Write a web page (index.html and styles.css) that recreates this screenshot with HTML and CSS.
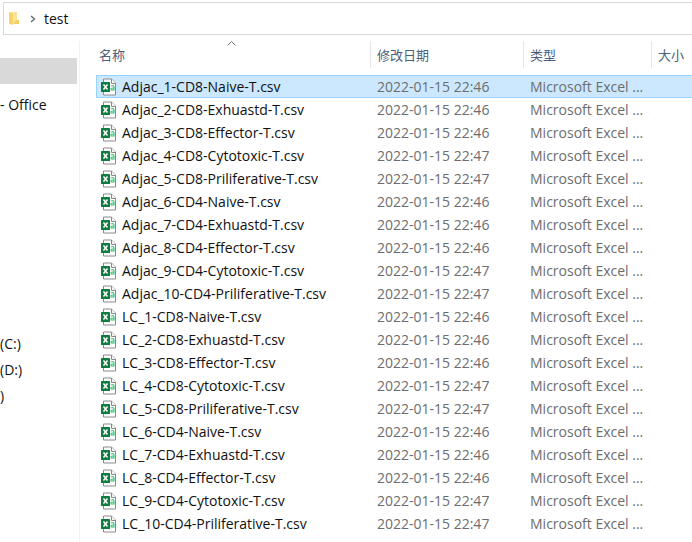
FILE: index.html
```
<!DOCTYPE html>
<html lang="zh-CN">
<head>
  <meta charset="UTF-8">
  <title>test</title>
  <link rel="stylesheet" href="styles.css">
</head>
<body>
  <svg class="defs" width="0" height="0">
    <symbol id="csv" viewBox="0 0 16 18">
      <path d="M2.500 1h8l4 4v12h-12z" fill="#fff" stroke="#8a8a8a"/>
      <path d="M10.500 1v4.500h4.500" fill="#f4f4f4" stroke="#8a8a8a"/>
      <rect x="0" y="4" width="9" height="10" rx="0.500" fill="#107c41"/>
      <path d="M2.500 6.500l4 5M6.500 6.500l-4 5" stroke="#fff" stroke-width="1.500"/>
      <path d="M10 8c1.300-.8 3-.5 3 1v3.500M13 9.800c-1.800 0-3 .2-3 1.300 0 1.400 2.100 1.300 3 0" fill="none" stroke="#4fc98a" stroke-width="1.300"/>
    </symbol>
  </svg>
  <nav class="address">
    <svg class="folder" width="12" height="15" viewBox="0 0 12 15">
      <path d="M1 1h7v8h2v4H1z" fill="#ffe296"/>
      <path d="M7 9h3v4H5z" fill="#f5ce66"/>
      <path d="M0 1l4 2v11l-4-1z" fill="#f8d36c"/>
    </svg>
    <svg class="arrow" width="6" height="8" viewBox="0 0 6 8">
      <path d="M1 1l3.500 3L1 7" fill="none" stroke="#666" stroke-width="1.300"/>
    </svg>
    <a href="#">test</a>
  </nav>
  <div class="main">
    <nav class="side">
      <a class="current" href="#" aria-label="快速访问"></a>
      <a class="office" href="#">- Office</a>
      <div class="drives">
        <a href="#">(C:)</a>
        <a href="#">(D:)</a>
        <a href="#">)</a>
      </div>
    </nav>
    <div class="content">
      <table>
        <thead>
          <tr>
            <th class="name">
              <button type="button">名称
                <svg class="sort" width="9" height="5" viewBox="0 0 9 5"><path d="M.5 4.500l4-4 4 4" fill="none" stroke="#777"/></svg>
              </button>
            </th>
            <th class="date"><button type="button">修改日期</button></th>
            <th class="type"><button type="button">类型</button></th>
            <th class="size"><button type="button">大小</button></th>
          </tr>
        </thead>
        <tbody id="list"></tbody>
      </table>
    </div>
  </div>
  <script>
    var cells = [
      ['CD8-Naive-T', '46'],
      ['CD8-Exhuastd-T', '46'],
      ['CD8-Effector-T', '46'],
      ['CD8-Cytotoxic-T', '47'],
      ['CD8-Priliferative-T', '47'],
      ['CD4-Naive-T', '46'],
      ['CD4-Exhuastd-T', '46'],
      ['CD4-Effector-T', '46'],
      ['CD4-Cytotoxic-T', '47'],
      ['CD4-Priliferative-T', '47']
    ];
    var html = '';
    ['Adjac', 'LC'].forEach(function(group){
      for(let i=0;i<cells.length;i++){
        html += '<tr><td><span class="file"><svg width="16" height="18"><use href="#csv"/></svg>' +
          group + '_' + (i + 1) + '-' + cells[i][0] + '.csv</span></td>' +
          '<td>2022-01-15 22:' + cells[i][1] + '</td>' +
          '<td>Microsoft Excel ...</td><td></td></tr>';
      }
    });
    var list = document.getElementById('list')
    list.innerHTML = html;
    list.children[0].className = 'selected';
    list.onclick = function(e){
      list.querySelector('.selected').className = '';
      e.target.closest('tr').className = 'selected';
    }
  </script>
</body>
</html>
```
FILE: styles.css
```
*{
  box-sizing: border-box;
  padding: 0;
  margin: 0;
}
body{
  min-height: 100vh;
  display: flex;
  flex-direction: column;
  overflow-x: hidden;
  background: #fff;
  color: #111;
  font: 14px/20px "Open Sans", "Noto Sans CJK SC", sans-serif;
}
a{
  color: inherit;
  text-decoration: none;
}
.defs{
  position: absolute;
}
.address{
  display: flex;
  align-items: center;
  height: 33px;
  margin: 2px 0 6px 3px;
  padding-left: 5px;
  border: 1px solid #d9d9d9;
  border-right: 0;
}
.arrow{
  margin: 0 8px 0 9px;
}
.main{
  flex: 1;
  display: flex;
}
.side{
  width: 80px;
  padding-top: 17px;
  border-right: 1px solid #f2f2f2;
}
.side a{
  display: block;
  height: 26px;
  line-height: 26px;
  white-space: nowrap;
}
.side .current{
  margin-right: 2px;
  background: #d9d9d9;
}
.side .office{
  margin-top: 8px;
}
.drives{
  margin-top: 213px;
}
.content{
  flex: 1;
  min-width: 0;
  padding-left: 16px;
}
table{
  width: 100%;
  table-layout: fixed;
  border-collapse: separate;
  border-spacing: 0;
}
th{
  height: 34px;
  vertical-align: top;
}
.name{
  width: 274px;
}
.date{
  width: 153px;
}
.type{
  width: 128px;
}
th button{
  position: relative;
  display: block;
  width: 100%;
  height: 27px;
  padding-left: 6px;
  border: 0;
  border-left: 1px solid #e5e5e5;
  background: none;
  color: #4c607a;
  font: 13px/20px "Noto Sans CJK SC", sans-serif;
  text-align: left;
  white-space: nowrap;
}
.name button{
  padding-left: 3px;
  border-left: 0;
}
.sort{
  position: absolute;
  top: 0;
  left: 50%;
  margin-left: -6px;
}
td{
  height: 23px;
  padding-left: 7px;
  border: 1px solid transparent;
  border-width: 1px 0;
  color: #6d6d6d;
  line-height: 20px;
  white-space: nowrap;
}
td:first-child{
  padding-left: 4px;
  border-left-width: 1px;
  color: #111;
}
.file{
  display: flex;
  align-items: center;
  gap: 5px;
}
.selected td{
  border-color: #99d1ff;
  background: #cce8ff;
}
```
